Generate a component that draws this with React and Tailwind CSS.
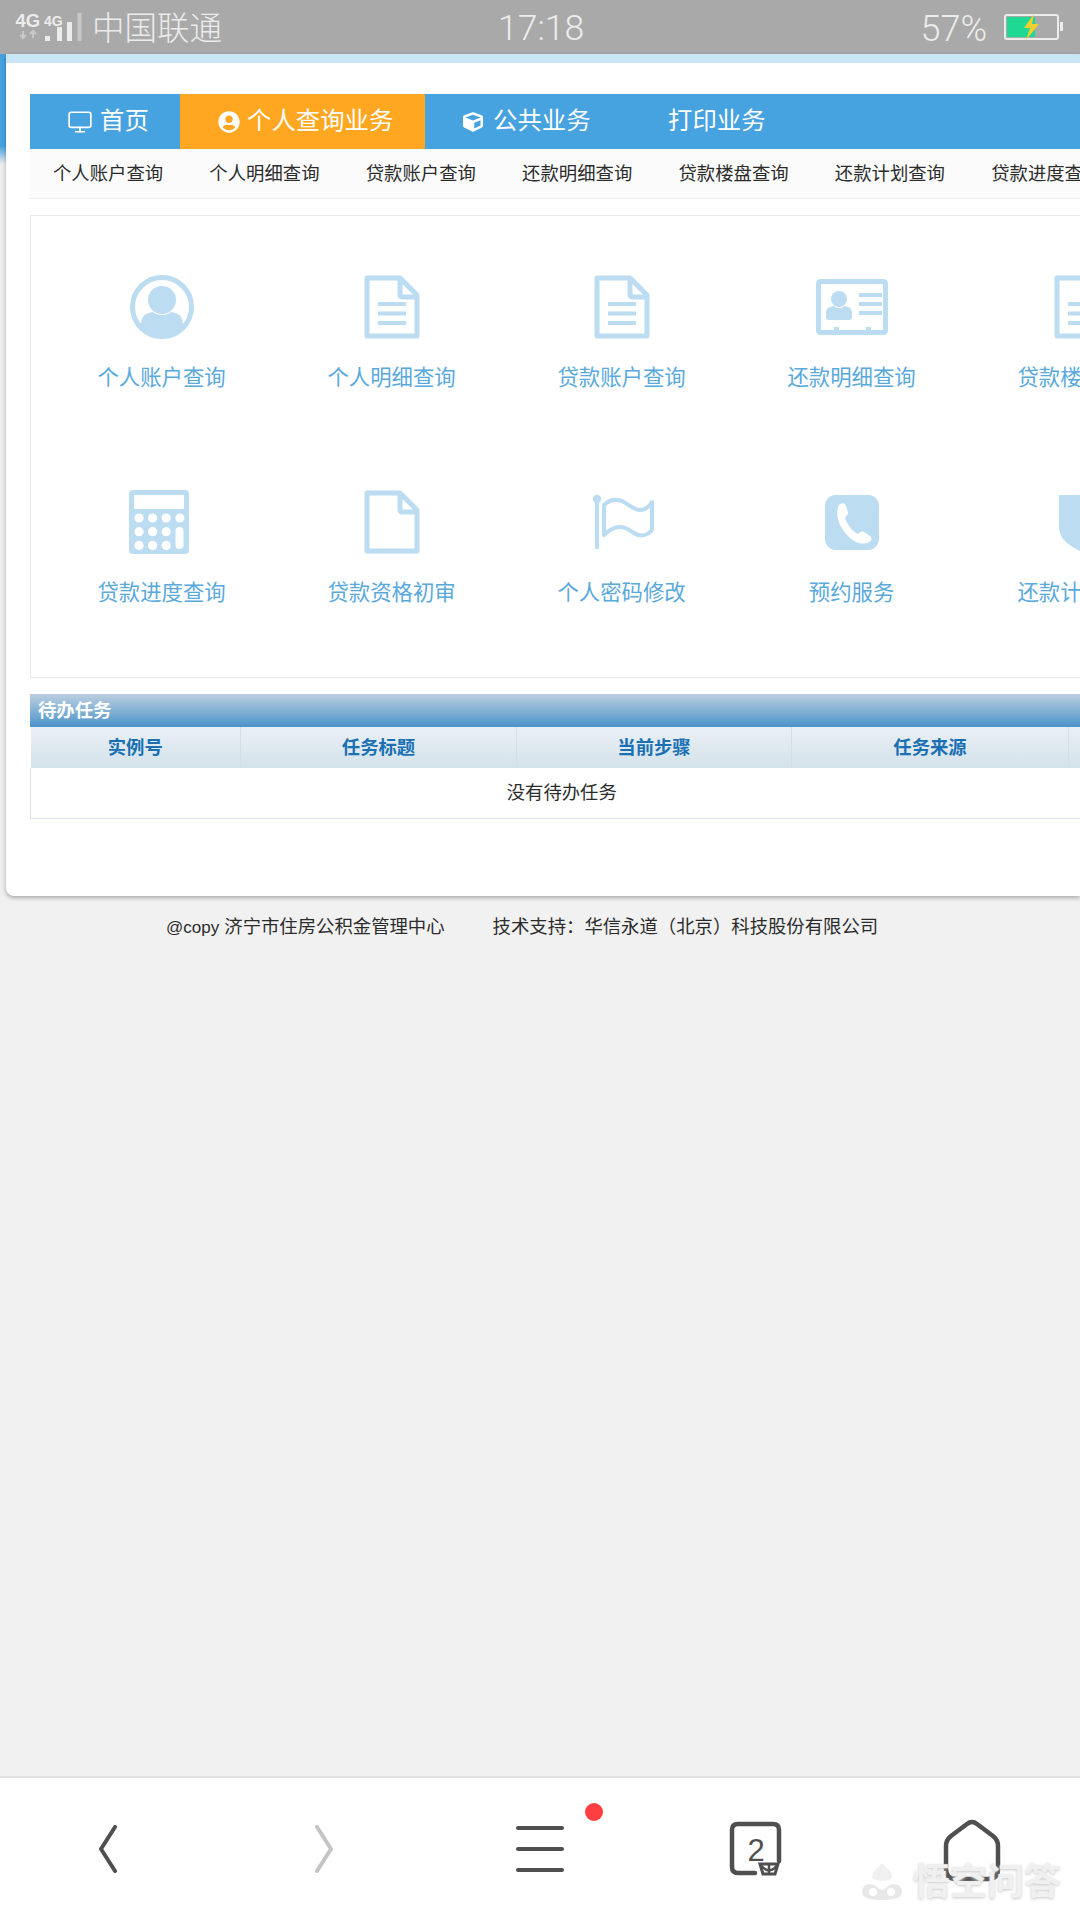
import React from 'react';
import { Monitor } from 'lucide-react';
import { FaUserCircle, FaCube } from 'react-icons/fa';

const C = '#bcdcf2';

function IconBox({ children }) {
  return <svg width="72" height="64" viewBox="0 0 72 64" className="shrink-0 overflow-visible">{children}</svg>;
}
const Avatar = () => (
  <IconBox>
    <circle cx="36" cy="32" r="29.5" fill="none" stroke={C} strokeWidth="5" />
    <circle cx="36" cy="25" r="14" fill={C} />
    <path d="M15 52 C15 42 17 39 27 37 C31 41 41 41 45 37 C55 39 57 42 57 52 C46 62 26 62 15 52Z" fill={C} />
  </IconBox>
);
const DocBase = ({ lines }) => (
  <IconBox>
    <path d="M11 3 H44 L61 20 V61 H11 Z" fill="none" stroke={C} strokeWidth="5" strokeLinejoin="round" />
    <path d="M44 3 V20 a2 2 0 0 0 2 2 H61" fill="none" stroke={C} strokeWidth="5" strokeLinejoin="round" />
    {lines && (
      <>
        <rect x="22" y="27" width="28" height="4" fill={C} />
        <rect x="22" y="36.5" width="28" height="4" fill={C} />
        <rect x="22" y="46" width="28" height="4" fill={C} />
      </>
    )}
  </IconBox>
);
const Doc = () => <DocBase lines />;
const Blank = () => <DocBase />;
const Card = () => (
  <IconBox>
    <rect x="2.5" y="6.5" width="67" height="51" rx="2" fill="none" stroke={C} strokeWidth="5" />
    <circle cx="23" cy="24" r="8" fill={C} />
    <path d="M10 38 C10 33 13 32 18 31 C21 34 25 34 28 31 C33 32 36 33 36 38 V42 C36 44 35 45 33 45 H13 C11 45 10 44 10 42Z" fill={C} />
    <rect x="43" y="18" width="23" height="4" fill={C} />
    <rect x="43" y="27" width="23" height="4" fill={C} />
    <rect x="43" y="36" width="23" height="4" fill={C} />
    <rect x="18" y="52" width="5" height="6" fill={C} />
    <rect x="50" y="52" width="5" height="6" fill={C} />
  </IconBox>
);
const Calc = () => (
  <IconBox>
    <rect x="3" y="0" width="60" height="64" rx="4" fill={C} />
    <rect x="8" y="5" width="50" height="14" fill="#fff" />
    {[0, 1, 2].flatMap((r) =>
      [0, 1, 2, 3].map((c) =>
        c === 3 && r > 0 ? null : (
          <circle key={`${r}${c}`} cx={13 + c * 13.6} cy={28 + r * 13.7} r="4.6" fill="#fff" />
        )
      )
    )}
    <rect x="49.5" y="37" width="8" height="22" rx="4" fill="#fff" />
  </IconBox>
);
const Flag = () => (
  <IconBox>
    <circle cx="11" cy="9" r="4.2" fill={C} />
    <rect x="9" y="10" width="4" height="49" fill={C} />
    <path d="M18 15 C24 9 30 9 36 11 C42 14 48 20 54 20 C58 20 63 17 66 12 V40 C62 45 56 46 52 45 C46 43 42 37 34 37 C28 37 22 41 18 45 Z" fill="none" stroke={C} strokeWidth="4" strokeLinejoin="round" />
  </IconBox>
);
const Phone = () => (
  <IconBox>
    <rect x="9" y="5" width="54" height="55" rx="11" fill={C} />
    <path d="M23 15 C26 12 29 13 30 16 L32 22 C32.5 24 31 26 29 27 C30 33 36 41 42 44 C44 42 46 41 48 42 L54 46 C56 48 56 50 53 52 C48 55 40 54 33 47 C24 39 18 25 23 15Z" fill="#fff" />
  </IconBox>
);
const Shield = () => (
  <IconBox>
    <path d="M13 5 H59 V36 C59 50 48 56 36 62 C24 56 13 50 13 36Z" fill={C} />
  </IconBox>
);

const row1 = [
  ['个人账户查询', Avatar],
  ['个人明细查询', Doc],
  ['贷款账户查询', Doc],
  ['还款明细查询', Card],
  ['贷款楼盘查询', Doc],
];
const row2 = [
  ['贷款进度查询', Calc],
  ['贷款资格初审', Blank],
  ['个人密码修改', Flag],
  ['预约服务', Phone],
  ['还款计划查询', Shield],
];
const subnav = ['个人账户查询', '个人明细查询', '贷款账户查询', '还款明细查询', '贷款楼盘查询', '还款计划查询', '贷款进度查询'];
const cols = [
  ['实例号', 'w-[210px]'],
  ['任务标题', 'w-[276px]'],
  ['当前步骤', 'w-[275px]'],
  ['任务来源', 'w-[277px]'],
  ['', 'w-[24px]'],
];

function GridRow({ items }) {
  return (
    <div className="flex h-[215px] pl-[15.6px] pt-[59px]">
      {items.map(([label, Ico]) => (
        <div key={label} className="flex w-[230px] shrink-0 flex-col items-center">
          <Ico />
          <span className="mt-[26px] whitespace-nowrap text-[21.4px] leading-[26px] text-[#5aa9dc]">{label}</span>
        </div>
      ))}
    </div>
  );
}

function StatusBar() {
  return (
    <div className="flex h-[54px] shrink-0 items-center bg-[#a9a9a9] text-[#ececec]">
      <div className="flex w-[498px] shrink-0 items-center">
        <svg width="92" height="54" viewBox="0 0 92 54" className="shrink-0">
          <text x="15.5" y="27" fontSize="18.5" fontWeight="700" fill="#ececec" fontFamily="Liberation Sans">4G</text>
          <text x="44" y="25.5" fontSize="14" fontWeight="700" fill="#ececec" fontFamily="Liberation Sans">4G</text>
          <path d="M23 31 v7 M20 35 l3 3 3-3 M33 38 v-7 M30 34 l3-3 3 3" stroke="#c9c9c9" strokeWidth="2" fill="none" />
          <rect x="45" y="36" width="5" height="5" fill="#ececec" />
          <rect x="57" y="27" width="5" height="14" fill="#ececec" />
          <rect x="67" y="22" width="5" height="19" fill="#ececec" />
          <rect x="77.5" y="13" width="4" height="28" fill="#c8c8c8" />
        </svg>
        <span className="pt-[4px] text-[32.5px] leading-none font-light">中国联通</span>
      </div>
      <span className="pt-[4px] font-['Roboto',sans-serif] text-[35.5px] leading-none font-light">17:18</span>
      <div className="ml-auto flex items-center pr-[16px]">
        <span className="pt-[3px] font-['Roboto',sans-serif] text-[36px] leading-none font-light">57%</span>
        <svg width="60" height="28" viewBox="0 0 60 28" className="ml-[17px]">
          <rect x="1" y="2" width="53" height="24" rx="2" fill="none" stroke="#ececec" strokeWidth="2" />
          <rect x="3" y="4" width="28" height="20" fill="#1fd893" />
          <rect x="56" y="9" width="3" height="9" fill="#ececec" />
          <path d="M30 1 L20 15 H26 L22 27 L35 11 H28 Z" fill="#f2cf2c" />
        </svg>
      </div>
    </div>
  );
}

function Tabs() {
  return (
    <div className="flex h-[55px] items-center bg-[#47a2e0] text-[24.4px] leading-none text-white">
      <div className="flex h-full w-[150px] shrink-0 items-center gap-[7px] pl-[37px]">
        <Monitor size={26} strokeWidth={1.6} />
        <span>首页</span>
      </div>
      <div className="flex h-full w-[245px] shrink-0 items-center gap-[7px] bg-[#ffa721] pl-[38px]">
        <FaUserCircle size={22} />
        <span>个人查询业务</span>
      </div>
      <div className="flex h-full w-[220px] shrink-0 items-center gap-[10px] pl-[38px]">
        <FaCube size={20} />
        <span>公共业务</span>
      </div>
      <span className="ml-[23px]">打印业务</span>
    </div>
  );
}

function BottomNav() {
  const ink = '#4f4f4f';
  return (
    <div className="relative flex h-[144px] shrink-0 items-center border-t-2 border-[#e2e2e2] bg-white">
      <div className="flex w-[216px] justify-center">
        <svg width="22" height="48" viewBox="0 0 22 48"><path d="M18 2 L4 24 L18 46" fill="none" stroke={ink} strokeWidth="4" strokeLinecap="round" strokeLinejoin="round" /></svg>
      </div>
      <div className="flex w-[216px] justify-center">
        <svg width="22" height="48" viewBox="0 0 22 48"><path d="M4 2 L18 24 L4 46" fill="none" stroke="#c4c4c4" strokeWidth="4" strokeLinecap="round" strokeLinejoin="round" /></svg>
      </div>
      <div className="relative flex w-[216px] justify-center">
        <div className="flex w-[48px] flex-col gap-[17px]">
          <div className="h-[4px] rounded-full bg-[#4f4f4f]" />
          <div className="h-[4px] rounded-full bg-[#4f4f4f]" />
          <div className="h-[4px] rounded-full bg-[#4f4f4f]" />
        </div>
        <div className="absolute left-[153px] top-[-23px] h-[18px] w-[18px] rounded-full bg-[#ff3e41]" />
      </div>
      <div className="flex w-[216px] justify-center">
        <svg width="56" height="56" viewBox="0 0 54 56">
          <path d="M50 40 V9 Q50 3 44 3 H9 Q3 3 3 9 V46 Q3 52 9 52 H26" fill="none" stroke={ink} strokeWidth="4.5" strokeLinecap="round" />
          <text x="27" y="40" textAnchor="middle" fontSize="31" fill={ink} fontFamily="Liberation Sans">2</text>
          <path d="M31 43 H49 L46 53 H34 Z" fill="none" stroke={ink} strokeWidth="3" />
          <path d="M40 43 V53 M31 43 Q36 50 40 49 Q44 50 49 43" fill="none" stroke={ink} strokeWidth="2.5" />
        </svg>
      </div>
      <div className="flex w-[216px] justify-center">
        <svg width="58" height="63" viewBox="0 0 58 63" className="mt-[3px]">
          <path d="M29 3 Q31.5 3 34 5 L50 17 Q55 21 55 27 V50 Q55 60 45 60 H13 Q3 60 3 50 V27 Q3 21 8 17 L24 5 Q26.5 3 29 3Z" fill="none" stroke={ink} strokeWidth="4.5" />
        </svg>
      </div>
      <div className="absolute left-[860px] top-[84px] flex items-center gap-[9px]">
        <svg width="44" height="40" viewBox="0 0 44 40" className="shrink-0">
          <path d="M22 1 C26 6 32 9 32 15 C32 20 12 20 12 15 C12 9 18 6 22 1Z" fill="#f0f0f0" />
          <path d="M2 30 C2 23 9 21 14 23 C18 25 20 28 22 28 C24 28 26 25 30 23 C35 21 42 23 42 30 C42 36 34 38 22 38 C10 38 2 36 2 30Z" fill="#e8e8e8" />
          <circle cx="13" cy="30" r="4" fill="#fff" />
          <circle cx="31" cy="30" r="4" fill="#fff" />
        </svg>
        <span className="text-[37px] leading-none font-bold whitespace-nowrap text-[#f0f0f0] [text-shadow:0_1px_3px_#c8c8c8]">悟空问答</span>
      </div>
    </div>
  );
}

export default function App() {
  return (
    <div className="flex h-[1920px] w-[1080px] flex-col overflow-hidden bg-[#f1f1f1] font-['Liberation_Sans','Noto_Sans_CJK_SC',sans-serif]">
      <StatusBar />
      <div className="shrink-0 bg-[linear-gradient(to_bottom,#47a2e0_0,#47a2e0_92px,#eeeeee_110px,#eeeeee_842px,#f1f1f1_842px)] pl-[6px]">
        <div className="h-[842px] overflow-hidden rounded-bl-lg border-t-[9px] border-[#c9e6f5] bg-white pt-[31px] pl-[24px] shadow-[0_2px_4px_rgba(0,0,0,0.3)]">
          <Tabs />
          <div className="flex h-[50px] items-center gap-[46.2px] border-b border-[#eeeeee] bg-[#fbfbfb] pl-[23px] text-[18.37px] whitespace-nowrap text-[#2b2b2b]">
            {subnav.map((t) => (
              <span key={t} className="shrink-0">{t}</span>
            ))}
          </div>
          <div className="mt-[16px] h-[463px] w-[1100px] border border-[#e8e8e8]">
            <GridRow items={row1} />
            <GridRow items={row2} />
          </div>
          <div className="mt-[16px] w-[1062px]">
            <div className="flex h-[33px] items-center bg-[linear-gradient(to_bottom,#bccfe1,#4b94c9)] pl-[8px] text-[18.37px] font-bold text-white">待办任务</div>
            <table className="w-[1062px] table-fixed border-collapse">
              <thead>
                <tr className="h-[41px] bg-[linear-gradient(to_bottom,#e9f0f5,#d4e2ea)]">
                  {cols.map(([t, w], i) => (
                    <th key={i} className={`${w} border-r border-[#d3dfe7] p-0 text-center text-[18.37px] font-bold text-[#1a70b3]`}>{t}</th>
                  ))}
                </tr>
              </thead>
              <tbody>
                <tr className="h-[50px] border-b border-l border-[#d5e2ec]">
                  <td colSpan={5} className="p-0 text-center text-[18.37px] text-[#2b2b2b]">没有待办任务</td>
                </tr>
              </tbody>
            </table>
          </div>
        </div>
      </div>
      <div className="flex h-[62px] shrink-0 items-center pl-[166px] text-[18.37px] whitespace-nowrap text-[#2b2b2b]">
        <span><span className="text-[17px]">@copy</span> 济宁市住房公积金管理中心</span>
        <span className="ml-[48px]">技术支持：华信永道（北京）科技股份有限公司</span>
      </div>
      <div className="flex-1" />
      <BottomNav />
    </div>
  );
}
